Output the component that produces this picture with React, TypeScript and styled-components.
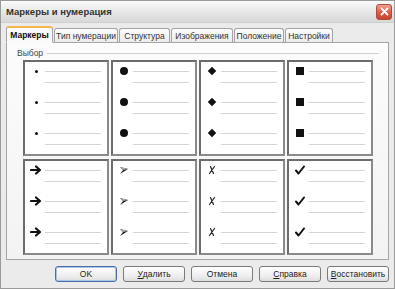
import styled, { createGlobalStyle } from "styled-components";

const GlobalStyle = createGlobalStyle`
    html, body {
        margin: 0;
        padding: 0;
        background: #e9e9e9;
    }
    * {
        box-sizing: border-box;
    }
`

const Window = styled.div`
    width: 395px;
    height: 289px;
    display: flex;
    flex-direction: column;
    background: #ebebeb;
    border: 1px solid #9a9a9a;
    font-family: "Liberation Sans", Arial, sans-serif;
    font-size: 8.5px;
    color: #222;
    overflow: hidden;
`

const TitleBar = styled.div`
    height: 22px;
    display: flex;
    align-items: center;
    justify-content: space-between;
    padding: 0 2px 0 5px;
    background: linear-gradient(#fbfbfb, #e4e4e4 60%, #d8d8d8);
    border-bottom: 1px solid #cfcfcf;
`

const Title = styled.span`
    font-weight: bold;
    font-size: 9.5px;
    color: #333;
`

const CloseButton = styled.div`
    width: 16px;
    height: 16px;
    border-radius: 3px;
    border: 1px solid #b04a3a;
    background: linear-gradient(#f0a08e, #d95a44 55%, #c84630);
    display: flex;
    align-items: center;
    justify-content: center;
`

const Body = styled.div`
    flex: 1;
    display: flex;
    flex-direction: column;
    padding: 2px 5px 0 5px;
`

const TabRow = styled.div`
    display: flex;
    align-items: flex-end;
    height: 17px;
    position: relative;
    z-index: 1;
`

const Tab = styled.div<{ $active?: boolean; $width: number }>`
    width: ${p => p.$width}px;
    height: ${p => (p.$active ? "17px" : "14px")};
    margin-left: ${p => (p.$active ? "0" : "1px")};
    display: flex;
    align-items: center;
    justify-content: center;
    border: 1px solid #a5a5a5;
    border-bottom: ${p => (p.$active ? "1px solid #fafafa" : "none")};
    border-radius: 3px 3px 0 0;
    background: ${p => (p.$active ? "#fafafa" : "linear-gradient(#fdfdfd, #ececec)")};
    border-top: ${p => (p.$active ? "2px solid #f4b64a" : "1px solid #a5a5a5")};
    color: ${p => (p.$active ? "#111" : "#333")};
    font-weight: ${p => (p.$active ? "bold" : "normal")};
    margin-bottom: ${p => (p.$active ? "-1px" : "0")};
    white-space: nowrap;
`

const Panel = styled.div`
    width: 383px;
    height: 218px;
    border: 1px solid #a5a5a5;
    background: linear-gradient(#fcfcfc, #f3f3f3);
    padding: 3px 9px 0 9px;
    display: flex;
    flex-direction: column;
`

const GroupHeader = styled.div`
    display: flex;
    align-items: center;
    gap: 4px;
    height: 14px;
    padding-left: 1px;
    color: #444;
`

const GroupLine = styled.div`
    flex: 1;
    height: 1px;
    background: #d0d0d0;
`

const Grid = styled.div`
    display: grid;
    grid-template-columns: repeat(4, 86px);
    grid-template-rows: repeat(2, 96px);
    gap: 3px 2px;
    margin: 0 0 0 7px;
`

const Cell = styled.div`
    border: 2px solid #6c6c6c;
    border-right-color: #8a8a8a;
    border-bottom-color: #8a8a8a;
    background: #fff;
    display: flex;
    flex-direction: column;
    padding: 4px 0 0 3px;
    gap: 11px;
`

const Item = styled.div`
    display: flex;
    align-items: flex-start;
    height: 20px;
`

const MarkerBox = styled.div`
    width: 16px;
    height: 10px;
    display: flex;
    align-items: center;
    justify-content: center;
`

const Lines = styled.div`
    flex: 1;
    display: flex;
    flex-direction: column;
    gap: 10px;
    padding: 5px 6px 0 1px;
`

const TextLine = styled.div`
    height: 1px;
    background: #d4d4d4;
`

const Dot = styled.div<{ $size: number }>`
    width: ${p => p.$size}px;
    height: ${p => p.$size}px;
    border-radius: 50%;
    background: #111;
`

const Diamond = styled.div`
    width: 6px;
    height: 6px;
    background: #111;
    transform: rotate(45deg);
`

const Square = styled.div`
    width: 8px;
    height: 8px;
    background: #111;
`

const ButtonRow = styled.div`
    display: flex;
    justify-content: flex-end;
    gap: 6px;
    padding: 6px 0 0 0;
`

const Button = styled.div<{ $primary?: boolean }>`
    width: 62px;
    height: 16px;
    display: flex;
    align-items: center;
    justify-content: center;
    border: 1px solid ${p => (p.$primary ? "#4a6fa5" : "#7a7a7a")};
    border-radius: 3px;
    background: linear-gradient(#ffffff, #ececec 70%, #dcdcdc);
    box-shadow: ${p => (p.$primary ? "inset 0 0 0 1px #a8c4ec" : "none")};
    color: #222;
    font-size: 8.5px;
`

const Key = styled.span`
    text-decoration: underline;
`

const Arrow = () => (
    <svg width="12" height="10" viewBox="0 0 12 10">
        <path d="M1 5 H9 M6 1.5 L10 5 L6 8.5" stroke="#111" strokeWidth="2.2" fill="none" strokeLinecap="round" strokeLinejoin="round" />
    </svg>
)

const ArrowHead = () => (
    <svg width="10" height="10" viewBox="0 0 10 10">
        <path d="M1 2 L9 4 L1 9 L4 5 Z" fill="#222" />
        <path d="M1 2 L9 4 L4 5 Z" fill="#aaa" />
    </svg>
)

const Cross = () => (
    <svg width="8" height="10" viewBox="0 0 8 10">
        <path d="M2.5 1.5 L5.5 8.5 M6.5 1.5 L1.5 8.5" stroke="#222" strokeWidth="1.2" fill="none" strokeLinecap="round" />
    </svg>
)

const Check = () => (
    <svg width="10" height="10" viewBox="0 0 10 10">
        <path d="M1 5.5 L3.5 8.5 L9 1.5" stroke="#111" strokeWidth="2" fill="none" strokeLinecap="round" strokeLinejoin="round" />
    </svg>
)

const markers = [
    <Dot $size={3} />,
    <Dot $size={8} />,
    <Diamond />,
    <Square />,
    <Arrow />,
    <ArrowHead />,
    <Cross />,
    <Check />,
]

const tabs = [
    { name: "Маркеры", width: 47 },
    { name: "Тип нумерации", width: 64 },
    { name: "Структура", width: 51 },
    { name: "Изображения", width: 62 },
    { name: "Положение", width: 50 },
    { name: "Настройки", width: 48 },
]

export default function App() {
    return (
        <>
            <GlobalStyle />
            <Window>
                <TitleBar>
                    <Title>Маркеры и нумерация</Title>
                    <CloseButton>
                        <svg width="9" height="9" viewBox="0 0 9 9">
                            <path d="M1.5 1.5 L7.5 7.5 M7.5 1.5 L1.5 7.5" stroke="#fff" strokeWidth="1.8" strokeLinecap="round" />
                        </svg>
                    </CloseButton>
                </TitleBar>
                <Body>
                    <TabRow>
                        {tabs.map((t, i) => (
                            <Tab key={t.name} $active={i === 0} $width={t.width}>{t.name}</Tab>
                        ))}
                    </TabRow>
                    <Panel>
                        <GroupHeader>
                            <span>Выбор</span>
                            <GroupLine />
                        </GroupHeader>
                        <Grid>
                            {markers.map((m, i) => (
                                <Cell key={i}>
                                    {[0, 1, 2].map(j => (
                                        <Item key={j}>
                                            <MarkerBox>{m}</MarkerBox>
                                            <Lines>
                                                <TextLine />
                                                <TextLine />
                                            </Lines>
                                        </Item>
                                    ))}
                                </Cell>
                            ))}
                        </Grid>
                    </Panel>
                    <ButtonRow>
                        <Button $primary>OK</Button>
                        <Button><Key>У</Key>далить</Button>
                        <Button>Отмена</Button>
                        <Button><Key>С</Key>правка</Button>
                        <Button><Key>В</Key>осстановить</Button>
                    </ButtonRow>
                </Body>
            </Window>
        </>
    )
}
